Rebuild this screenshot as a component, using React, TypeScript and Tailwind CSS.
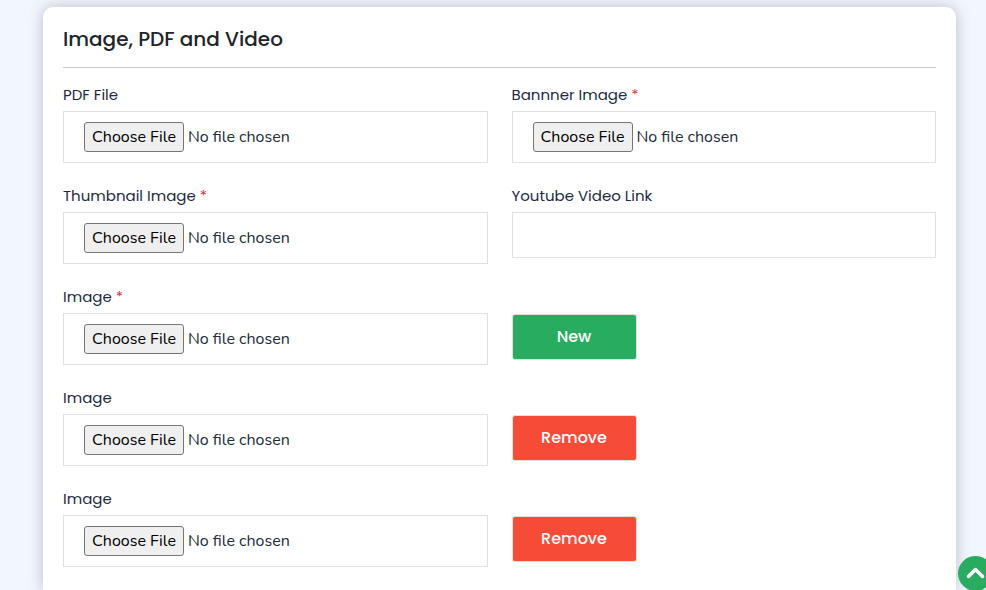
import { useId } from "react";

const headingFont = "font-['Poppins','Inter',sans-serif]";
const fieldFont = "font-['Nunito','Open_Sans',sans-serif]";

type FieldProps = { label: string; required?: boolean; type?: "file" | "text" };

function Field({ label, required = false, type = "file" }: FieldProps) {
  const id = useId();
  return (
    <div className="min-w-0">
      <label htmlFor={id} className={`block h-7 text-[15px] leading-6 text-[#1c2b3f] ${headingFont}`}>
        {label}
        {required && <span className="text-[#dc3545]"> *</span>}
      </label>
      {type === "file" ? (
        <input
          id={id}
          type="file"
          className={`block h-[52px] w-full border border-[#e1e1e1] bg-white px-5 py-[10px] text-base leading-[30px] text-[#212b3a] outline-none file:mr-1 file:h-[30px] file:w-[100px] file:rounded-[3px] file:border file:border-solid file:border-[#767676] file:bg-[#efefef] file:p-0 file:text-center file:text-base file:leading-6 file:text-black ${fieldFont}`}
        />
      ) : (
        <input
          id={id}
          type="text"
          className={`block h-[46px] w-full border border-[#e1e1e1] bg-white px-5 text-base text-[#212b3a] outline-none ${fieldFont}`}
        />
      )}
    </div>
  );
}

function ActionButton({ kind }: { kind: "New" | "Remove" }) {
  const color = kind === "New" ? "bg-[#28ad60]" : "bg-[#f64b36]";
  return (
    <div className="pt-[29px]">
      <button
        type="button"
        className={`block h-[46px] w-[125px] rounded-[3px] border border-[#e1e1e1] text-base font-medium text-white ${color} ${headingFont}`}
      >
        {kind}
      </button>
    </div>
  );
}

export default function App() {
  return (
    <div className="flex min-h-screen flex-col bg-[#f2f6ff] pt-[7px] pr-[30px] pl-[43px]">
      <main className="flex-1 rounded-t-[10px] bg-white px-5 pt-4 shadow-[0_0_15px_rgba(60,70,70,0.3)]">
        <h1 className={`border-b border-[#c8cacc] pb-3 text-xl leading-8 font-medium text-[#212529] ${headingFont}`}>
          Image, PDF and Video
        </h1>
        <form className="grid grid-cols-2 gap-x-6 gap-y-[21px] pt-[15px]">
          <Field label="PDF File" />
          <Field label="Bannner Image" required />
          <Field label="Thumbnail Image" required />
          <Field label="Youtube Video Link" type="text" />
          <Field label="Image" required />
          <ActionButton kind="New" />
          <Field label="Image" />
          <ActionButton kind="Remove" />
          <Field label="Image" />
          <ActionButton kind="Remove" />
        </form>
      </main>
      <button
        type="button"
        aria-label="Back to top"
        className="fixed -right-[7px] -bottom-px flex size-[35px] items-center justify-center rounded-full bg-[#28ad60]"
      >
        <svg width="19" height="13" viewBox="0 0 19 13" fill="none" stroke="white" strokeWidth="3.5" strokeLinecap="round" strokeLinejoin="round">
          <path d="M2.5 9.5 9.5 2.5 16.5 9.5" />
        </svg>
      </button>
    </div>
  );
}
